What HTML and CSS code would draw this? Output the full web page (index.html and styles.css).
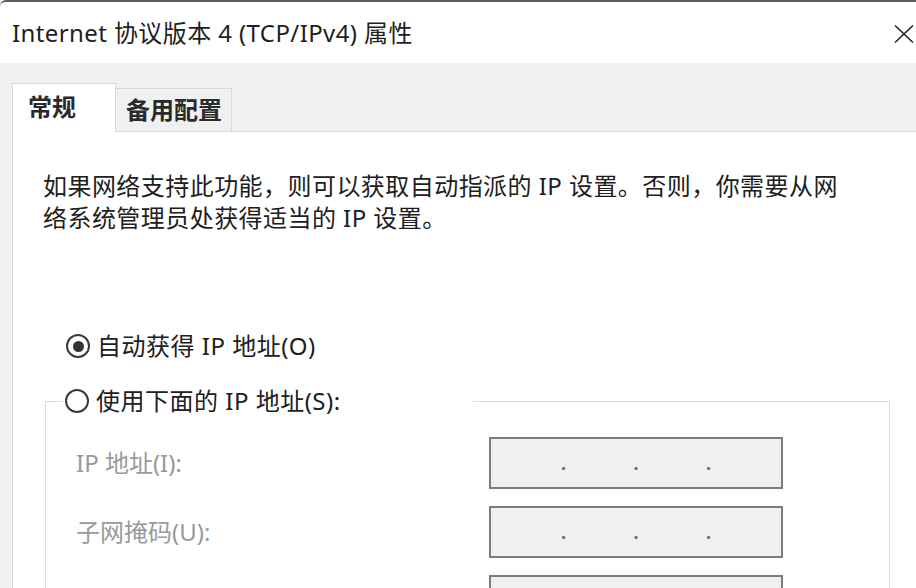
FILE: index.html
```html
<!DOCTYPE html>
<html lang="zh-CN">

<head>
    <meta charset="UTF-8">
    <title>Internet 协议版本 4 (TCP/IPv4) 属性</title>
    <link rel="stylesheet" href="styles.css">
</head>

<body>
    <div class="window">
        <!-- Title bar -->
        <div class="titlebar">
            <span class="title">Internet 协议版本 4 (TCP/IPv4) 属性</span>
            <svg class="close" width="20" height="18" viewBox="0 0 20 18">
                <path d="M1 0.5 L19 17.5 M19 0.5 L1 17.5" />
            </svg>
        </div>

        <div class="content">
            <div class="tabs">
                <div class="tab active">常规</div>
                <div class="tab">备用配置</div>
            </div>

            <div class="panel">
                <p class="intro">如果网络支持此功能，则可以获取自动指派的 IP 设置。否则，你需要从网络系统管理员处获得适当的 IP 设置。</p>

                <label class="option">
                    <span class="radio checked"></span>
                    <span>自动获得 IP 地址(O)</span>
                </label>

                <fieldset class="group">
                    <legend>
                        <label class="option">
                            <span class="radio"></span>
                            <span>使用下面的 IP 地址(S):</span>
                        </label>
                    </legend>

                    <div class="fields">
                        <span class="field-label">IP 地址(I):</span>
                        <div class="ip-box"><span>.</span><span>.</span><span>.</span></div>

                        <span class="field-label">子网掩码(U):</span>
                        <div class="ip-box"><span>.</span><span>.</span><span>.</span></div>

                        <span class="field-label">默认网关(D):</span>
                        <div class="ip-box"><span>.</span><span>.</span><span>.</span></div>
                    </div>
                </fieldset>
            </div>
        </div>
    </div>
</body>

</html>
```

FILE: styles.css
```css
html,
body {
    margin: 0;
    padding: 0;
}

body {
    width: 916px;
    height: 588px;
    overflow: hidden;
    background-color: #f0f0f0;
    font-family: "Noto Sans", "Noto Sans CJK SC", sans-serif;
    font-size: 24px;
    color: #1e1e1e;
}

/* Title bar */
.titlebar {
    height: 61px;
    background-color: #ffffff;
    border-top: 2px solid #5e5e5e;
    border-top-left-radius: 6px;
    display: flex;
    align-items: center;
    justify-content: space-between;
    padding: 0 2px 0 12px;
}

.title {
    font-size: 24px;
    letter-spacing: 0.4px;
    line-height: 32px;
}

.close {
    display: block;
    margin-top: 2px;
}

.close path {
    stroke: #2b2b2b;
    stroke-width: 1.6;
    fill: none;
}

/* Tabs */
.content {
    padding-left: 12px;
}

.tabs {
    display: flex;
    align-items: flex-end;
    padding-top: 20px;
    border-bottom: 1px solid #d9d9d9;
}

.tab {
    height: 42px;
    line-height: 42px;
    padding: 0 8px 0 10px;
    width: 97px;
    background-color: #f0f0f0;
    border: 1px solid #d9d9d9;
    border-left: none;
    border-bottom: none;
    font-weight: 600;
    color: #2a2a2a;
}

.tab.active {
    height: 48px;
    line-height: 46px;
    width: 72px;
    padding: 0 15px 0 15px;
    margin-bottom: -1px;
    background-color: #ffffff;
    border-left: 1px solid #d9d9d9;
}

/* Page content */
.panel {
    background-color: #ffffff;
    border-left: 1px solid #d9d9d9;
    height: 470px;
    padding-left: 30px;
}

.intro {
    margin: 0;
    padding-top: 38px;
    width: 800px;
    letter-spacing: 0.45px;
    line-height: 32px;
    color: #202020;
}

.option {
    display: flex;
    align-items: center;
    gap: 7px;
    line-height: 32px;
    letter-spacing: 0.5px;
    color: #202020;
}

.panel > .option {
    margin-top: 96px;
    padding-left: 23px;
}

.radio {
    width: 20px;
    height: 20px;
    border: 2px solid #3a3a3a;
    border-radius: 50%;
    display: flex;
    align-items: center;
    justify-content: center;
    flex-shrink: 0;
}

.radio.checked::after {
    content: "";
    width: 11px;
    height: 11px;
    border-radius: 50%;
    background-color: #333333;
}

/* Group box */
.group {
    margin: 23px 0 0 2px;
    padding: 0;
    width: 843px;
    border: 1px solid #dcdcdc;
    border-bottom: none;
}

.group legend {
    padding: 0 2px;
    margin-left: 17px;
    width: 406px;
}

.fields {
    display: grid;
    grid-template-columns: 413px 294px;
    row-gap: 17px;
    align-items: center;
    padding: 20px 0 0 30px;
}

.field-label {
    color: #9a9a9a;
    line-height: 32px;
}

.ip-box {
    height: 48px;
    border: 2px solid #7d7d7d;
    background-color: #f0f0f0;
    display: grid;
    grid-template-columns: 1fr 1fr 1fr 1fr;
    align-items: center;
}

.ip-box span {
    grid-row: 1;
    font-size: 18px;
    font-weight: 700;
    color: #6e6e6e;
    line-height: 16px;
    text-align: center;
}

.ip-box span:nth-child(1) {
    grid-column: 1 / 3;
}

.ip-box span:nth-child(2) {
    grid-column: 2 / 4;
}

.ip-box span:nth-child(3) {
    grid-column: 3 / 5;
}
```
